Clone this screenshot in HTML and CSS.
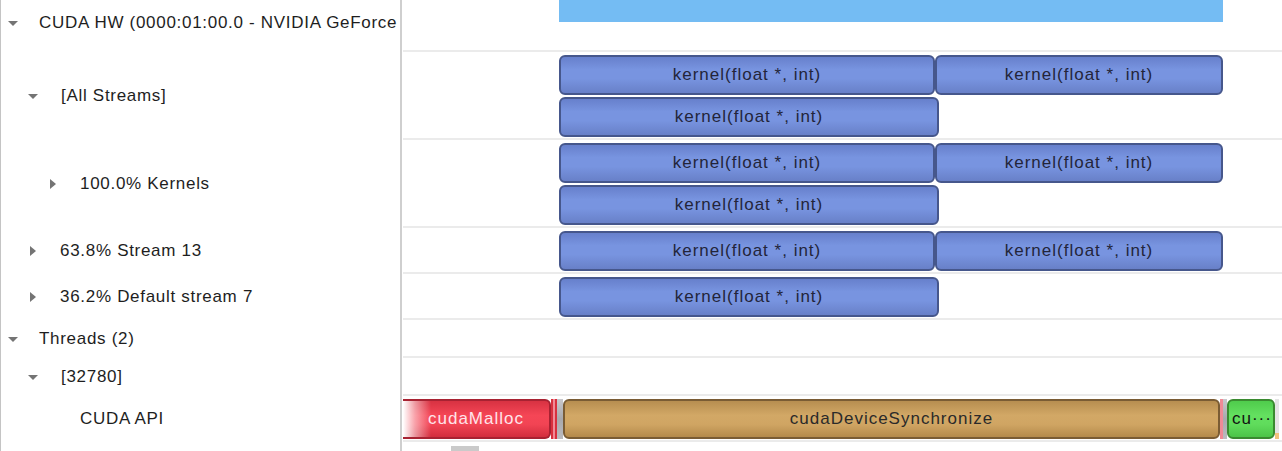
FILE: index.html
```html
<!DOCTYPE html>
<html lang="en">
<head>
    <meta charset="UTF-8">
    <title>Timeline</title>
    <link rel="stylesheet" href="styles.css">
</head>
<body>
    <div class="view">
        <div class="row row-0">
            <div class="label lvl0 top"><span class="toggle open"></span><span class="name">CUDA HW (0000:01:00.0 - NVIDIA GeForce</span></div>
            <div class="track">
                <div class="bar device" style="left: 156px; width: 664px;"></div>
            </div>
        </div>
        <div class="row row-big">
            <div class="label lvl1"><span class="toggle open"></span><span class="name">[All Streams]</span></div>
            <div class="track">
                <div class="bar kernel lane-1" style="left: 156px; width: 376px;">kernel(float *, int)</div>
                <div class="bar kernel lane-1" style="left: 532px; width: 288px;">kernel(float *, int)</div>
                <div class="bar kernel lane-2" style="left: 156px; width: 380px;">kernel(float *, int)</div>
            </div>
        </div>
        <div class="row row-big">
            <div class="label lvl2"><span class="toggle closed"></span><span class="name">100.0% Kernels</span></div>
            <div class="track">
                <div class="bar kernel lane-1" style="left: 156px; width: 376px;">kernel(float *, int)</div>
                <div class="bar kernel lane-1" style="left: 532px; width: 288px;">kernel(float *, int)</div>
                <div class="bar kernel lane-2" style="left: 156px; width: 380px;">kernel(float *, int)</div>
            </div>
        </div>
        <div class="row row-mid">
            <div class="label lvl1 shut"><span class="toggle closed"></span><span class="name">63.8% Stream 13</span></div>
            <div class="track">
                <div class="bar kernel lane-1" style="left: 156px; width: 376px;">kernel(float *, int)</div>
                <div class="bar kernel lane-1" style="left: 532px; width: 288px;">kernel(float *, int)</div>
            </div>
        </div>
        <div class="row row-mid">
            <div class="label lvl1 shut"><span class="toggle closed"></span><span class="name">36.2% Default stream 7</span></div>
            <div class="track">
                <div class="bar kernel lane-1" style="left: 156px; width: 380px;">kernel(float *, int)</div>
            </div>
        </div>
        <div class="row row-small">
            <div class="label lvl0"><span class="toggle open"></span><span class="name">Threads (2)</span></div>
            <div class="track"></div>
        </div>
        <div class="row row-small">
            <div class="label lvl1"><span class="toggle open"></span><span class="name">[32780]</span></div>
            <div class="track"></div>
        </div>
        <div class="row row-mid">
            <div class="label lvl2"><span class="toggle"></span><span class="name">CUDA API</span></div>
            <div class="track">
                <div class="bar api malloc" style="left: 0; width: 148px;">cudaMalloc</div>
                <div class="tick red" style="left: 148px;"></div>
                <div class="tick pink" style="left: 150px;"></div>
                <div class="tick red" style="left: 152px;"></div>
                <div class="tick gray" style="left: 154px; width: 6px;"></div>
                <div class="bar api sync" style="left: 160px; width: 657px;">cudaDeviceSynchronize</div>
                <div class="tick pink" style="left: 817px; width: 3px;"></div>
                <div class="tick gray" style="left: 820px; width: 4px;"></div>
                <div class="bar api other" style="left: 824px; width: 48px;">cu···</div>
                <div class="tick light" style="left: 872px; width: 4px;"></div>
            </div>
        </div>
        <div class="row row-scroll">
            <div class="label"></div>
            <div class="track scroll">
                <div class="thumb"></div>
            </div>
        </div>
    </div>
</body>
</html>
```

FILE: styles.css
```css
body {
    margin: 0;
    padding: 0;
    background-color: #ffffff;
    font-family: "Liberation Sans", Arial, sans-serif;
    font-size: 17px;
    color: #1e1e1e;
    overflow: hidden;
}
.view {
    width: 1282px;
    height: 451px;
    overflow: hidden;
}
.row {
    display: flex;
}
.row-0 {
    height: 52px;
}
.row-big {
    height: 88px;
}
.row-mid {
    height: 46px;
}
.row-small {
    height: 38px;
}
.row-scroll {
    height: 20px;
}
.label {
    box-sizing: border-box;
    width: 402px;
    flex: none;
    display: flex;
    align-items: center;
    border-left: 1px solid #c4c4c4;
    border-right: 2px solid #cfcfcf;
    white-space: nowrap;
    overflow: hidden;
    letter-spacing: 0.7px;
}
.label.top {
    padding-bottom: 7px;
}
.lvl0 {
    padding-left: 7px;
}
.lvl1 {
    padding-left: 27px;
}
.lvl1.shut {
    padding-left: 29px;
}
.lvl2 {
    padding-left: 49px;
}
.toggle {
    width: 10px;
    height: 10px;
    flex: none;
    margin-right: 21px;
    position: relative;
}
.lvl1 .toggle {
    margin-right: 23px;
}
.lvl1.shut .toggle,
.lvl2 .toggle {
    margin-right: 20px;
}
.toggle.open::before {
    content: "";
    position: absolute;
    left: 0;
    top: 3px;
    border-left: 5px solid transparent;
    border-right: 5px solid transparent;
    border-top: 5px solid #747474;
}
.toggle.closed::before {
    content: "";
    position: absolute;
    left: 0;
    top: 0;
    border-top: 5px solid transparent;
    border-bottom: 5px solid transparent;
    border-left: 6px solid #747474;
}
.name {
    line-height: 20px;
}
.track {
    position: relative;
    flex: 1;
    margin-left: 1px;
    border-bottom: 2px solid #ebebeb;
    overflow: hidden;
}
.track.scroll {
    border-bottom: none;
}
.thumb {
    position: absolute;
    left: 48px;
    top: 4px;
    width: 28px;
    height: 8px;
    background-color: #cacaca;
}
.bar {
    position: absolute;
    box-sizing: border-box;
    height: 40px;
    top: 3px;
    text-align: center;
    white-space: nowrap;
    overflow: hidden;
    line-height: 35px;
    letter-spacing: 1px;
}
.device {
    top: 0;
    height: 22px;
    background-color: #74bcf3;
}
.kernel {
    border: 2px solid #46578c;
    border-radius: 6px;
    color: #23253a;
    background: linear-gradient(#6780cc, #7894e0 35%, #7894e0 60%, #6880c8);
}
.lane-1 {
    top: 3px;
}
.lane-2 {
    top: 45px;
}
.api {
    color: #333333;
}
.malloc {
    border: 2px solid #a82232;
    border-left: none;
    border-radius: 0 6px 6px 0;
    color: #ffe4ea;
    background: linear-gradient(to right, #ffffff 0, rgba(255, 255, 255, 0.5) 12px, rgba(255, 255, 255, 0) 28px),
                linear-gradient(#d83242, #f54656 40%, #f24454 65%, #d22d3d);
}
.sync {
    border: 2px solid #7a5c34;
    border-radius: 6px;
    color: #2a2a2a;
    background: linear-gradient(#b78e50, #d2a866 40%, #d0a563 65%, #b48a4b);
}
.other {
    border: 2px solid #3a8a30;
    border-radius: 6px;
    text-align: left;
    padding-left: 3px;
    color: #111111;
    background: linear-gradient(#4fcc4c, #64e060 40%, #60dc5c 65%, #4cc448);
}
.tick {
    position: absolute;
    top: 3px;
    width: 2px;
    height: 40px;
}
.tick.red {
    background-color: #d8303e;
}
.tick.pink {
    background-color: #f08a96;
}
.tick.gray {
    background: linear-gradient(#c8c8cc, #a8a8ac 50%, #bcbcc0);
}
.tick.light {
    background: linear-gradient(#e4e4e4 85%, #f2c27e 85%);
}
```
